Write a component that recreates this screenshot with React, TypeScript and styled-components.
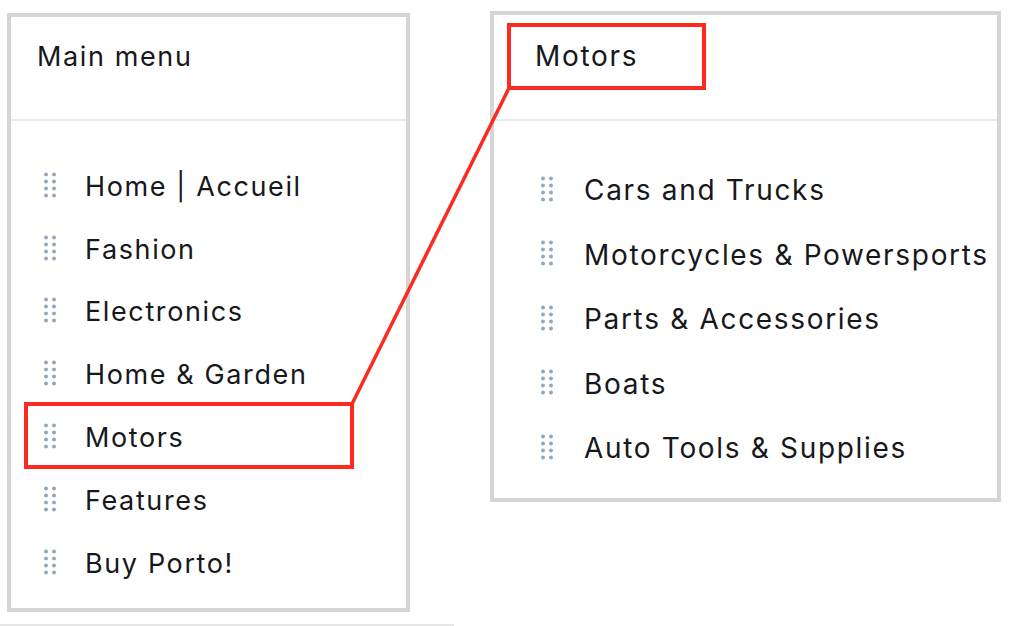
import React from 'react'
import styled, { createGlobalStyle } from 'styled-components'

const GlobalStyle = createGlobalStyle`
  html, body {
    margin: 0;
    padding: 0;
    background: #ffffff;
  }
  body {
    font-family: 'Inter', 'Liberation Sans', sans-serif;
    color: #16181b;
  }
`

interface MenuPanelProps {
  title: string
  items: string[]
  width: number
  height: number
  headerHeight: number
  titleInset: number
  titleTop: number
  handleInset: number
  textGap: number
  listTop: number
  rowHeight: number
  fontSize: number
}

const mainMenu = [
  'Home | Accueil',
  'Fashion',
  'Electronics',
  'Home & Garden',
  'Motors',
  'Features',
  'Buy Porto!',
]

const motorsMenu = [
  'Cars and Trucks',
  'Motorcycles & Powersports',
  'Parts & Accessories',
  'Boats',
  'Auto Tools & Supplies',
]

const DragHandle = () => (
  <HandleIcon width="12" height="26" viewBox="0 0 12 26" aria-hidden>
    {[0, 1, 2, 3].map(row =>
      [0, 1].map(col => (
        <circle
          key={`${row}-${col}`}
          cx={2 + col * 8}
          cy={2.5 + row * 7}
          r={2}
        />
      ))
    )}
  </HandleIcon>
)

const MenuPanel: React.FC<MenuPanelProps> = ({
  title,
  items,
  width,
  height,
  headerHeight,
  titleInset,
  titleTop,
  handleInset,
  textGap,
  listTop,
  rowHeight,
  fontSize,
}) => (
  <Panel $width={width} $height={height}>
    <PanelHeader
      $height={headerHeight}
      $inset={titleInset}
      $top={titleTop}
      $size={fontSize}
    >
      {title}
    </PanelHeader>
    <ItemList $top={listTop}>
      {items.map(item => (
        <Item
          key={item}
          $height={rowHeight}
          $inset={handleInset}
          $gap={textGap}
          $size={fontSize}
        >
          <DragHandle />
          <span>{item}</span>
        </Item>
      ))}
    </ItemList>
  </Panel>
)

export default function App() {
  return (
    <>
      <GlobalStyle />
      <Page>
        <Columns>
          <LeftSlot>
            <MenuPanel
              title="Main menu"
              items={mainMenu}
              width={403}
              height={599}
              headerHeight={104}
              titleInset={26}
              titleTop={24}
              handleInset={33}
              textGap={29}
              listTop={34}
              rowHeight={62.8}
              fontSize={27}
            />
          </LeftSlot>
          <RightSlot>
            <MenuPanel
              title="Motors"
              items={motorsMenu}
              width={511}
              height={491}
              headerHeight={106}
              titleInset={41}
              titleTop={25}
              handleInset={47}
              textGap={31}
              listTop={37}
              rowHeight={64.5}
              fontSize={28}
            />
          </RightSlot>
        </Columns>
        <FooterRule />

        {/* callout marking the Motors item and its opened submenu */}
        <Callout $left={24} $top={402} $width={330} $height={67} />
        <Callout $left={507} $top={23} $width={199} $height={67} />
        <Connector width="1016" height="626" viewBox="0 0 1016 626">
          <line
            x1="352"
            y1="404"
            x2="509"
            y2="88"
            stroke="#fb2b1f"
            strokeWidth="3.5"
          />
        </Connector>
      </Page>
    </>
  )
}

const Page = styled.div`
  position: relative;
  width: 1016px;
  height: 626px;
  overflow: hidden;
  display: flex;
  flex-direction: column;
  justify-content: space-between;
`

const Columns = styled.div`
  display: flex;
  align-items: flex-start;
  padding-left: 7px;
`

const LeftSlot = styled.div`
  margin-top: 13px;
`

const RightSlot = styled.div`
  margin-top: 11px;
  margin-left: 80px;
`

const Panel = styled.div<{ $width: number; $height: number }>`
  box-sizing: border-box;
  width: ${p => p.$width}px;
  height: ${p => p.$height}px;
  border: 4px solid #d5d5d5;
  background: #ffffff;
  display: flex;
  flex-direction: column;
`

const PanelHeader = styled.div<{
  $height: number
  $inset: number
  $top: number
  $size: number
}>`
  box-sizing: border-box;
  height: ${p => p.$height}px;
  padding: ${p => p.$top}px 0 0 ${p => p.$inset}px;
  border-bottom: 2px solid #e9ebec;
  font-size: ${p => p.$size}px;
  line-height: 32px;
  letter-spacing: 0.06em;
  flex-shrink: 0;
`

const ItemList = styled.div<{ $top: number }>`
  padding-top: ${p => p.$top}px;
  display: flex;
  flex-direction: column;
`

const Item = styled.div<{
  $height: number
  $inset: number
  $gap: number
  $size: number
}>`
  height: ${p => p.$height}px;
  display: flex;
  align-items: center;
  padding-left: ${p => p.$inset}px;
  gap: ${p => p.$gap}px;
  font-size: ${p => p.$size}px;
  letter-spacing: 0.06em;
  white-space: nowrap;
`

const HandleIcon = styled.svg`
  fill: #94a8bc;
  flex-shrink: 0;
  margin-top: -3px;
`

const FooterRule = styled.div`
  width: 454px;
  height: 2px;
  background: #e6e6e6;
`

const Callout = styled.div<{
  $left: number
  $top: number
  $width: number
  $height: number
}>`
  position: absolute;
  box-sizing: border-box;
  left: ${p => p.$left}px;
  top: ${p => p.$top}px;
  width: ${p => p.$width}px;
  height: ${p => p.$height}px;
  border: 4px solid #fb2b1f;
  pointer-events: none;
`

const Connector = styled.svg`
  position: absolute;
  left: 0;
  top: 0;
  pointer-events: none;
`
